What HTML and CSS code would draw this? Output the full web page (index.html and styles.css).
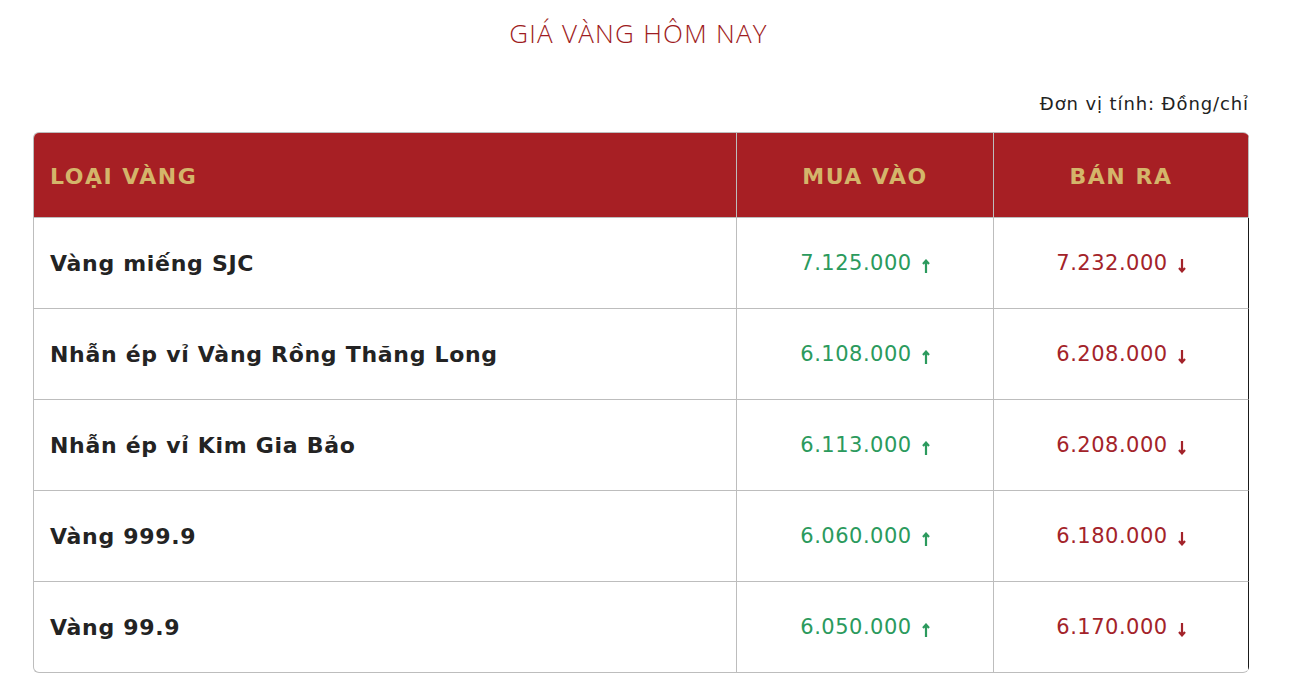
FILE: index.html
```html
<!DOCTYPE html>
<html lang="vi">
<head>
<meta charset="utf-8">
<title>Giá vàng hôm nay</title>
<link rel="stylesheet" href="styles.css">
</head>
<body>
<div class="page">
  <h1 class="title">GIÁ VÀNG HÔM NAY</h1>
  <div class="unit">Đơn vị tính: Đồng/chỉ</div>
  <div class="price-table">
    <div class="cell head name">LOẠI VÀNG</div>
    <div class="cell head">MUA VÀO</div>
    <div class="cell head last">BÁN RA</div>

    <div class="cell name">Vàng miếng SJC</div>
    <div class="cell num up">7.125.000<svg class="arrow" viewBox="0 0 8 14"><path d="M4 14V2.2M1 5L4 1.6L7 5" /></svg></div>
    <div class="cell num down last">7.232.000<svg class="arrow" viewBox="0 0 8 14"><path d="M4 0V11.8M1 9L4 12.4L7 9" /></svg></div>

    <div class="cell name">Nhẫn ép vỉ Vàng Rồng Thăng Long</div>
    <div class="cell num up">6.108.000<svg class="arrow" viewBox="0 0 8 14"><path d="M4 14V2.2M1 5L4 1.6L7 5" /></svg></div>
    <div class="cell num down last">6.208.000<svg class="arrow" viewBox="0 0 8 14"><path d="M4 0V11.8M1 9L4 12.4L7 9" /></svg></div>

    <div class="cell name">Nhẫn ép vỉ Kim Gia Bảo</div>
    <div class="cell num up">6.113.000<svg class="arrow" viewBox="0 0 8 14"><path d="M4 14V2.2M1 5L4 1.6L7 5" /></svg></div>
    <div class="cell num down last">6.208.000<svg class="arrow" viewBox="0 0 8 14"><path d="M4 0V11.8M1 9L4 12.4L7 9" /></svg></div>

    <div class="cell name">Vàng 999.9</div>
    <div class="cell num up">6.060.000<svg class="arrow" viewBox="0 0 8 14"><path d="M4 14V2.2M1 5L4 1.6L7 5" /></svg></div>
    <div class="cell num down last">6.180.000<svg class="arrow" viewBox="0 0 8 14"><path d="M4 0V11.8M1 9L4 12.4L7 9" /></svg></div>

    <div class="cell name bottom">Vàng 99.9</div>
    <div class="cell num up bottom">6.050.000<svg class="arrow" viewBox="0 0 8 14"><path d="M4 14V2.2M1 5L4 1.6L7 5" /></svg></div>
    <div class="cell num down last bottom">6.170.000<svg class="arrow" viewBox="0 0 8 14"><path d="M4 0V11.8M1 9L4 12.4L7 9" /></svg></div>
  </div>
</div>
</body>
</html>
```
FILE: styles.css
```css
html, body {
  margin: 0;
  padding: 0;
  background: #ffffff;
}

.page {
  margin: 0 40px 0 33px;
  padding-top: 17px;
  font-family: "DejaVu Sans", "Noto Sans", sans-serif;
  color: #222222;
}

.title {
  margin: 0;
  text-align: center;
  font-family: "Open Sans", "Liberation Sans", sans-serif;
  font-weight: 300;
  font-size: 26px;
  line-height: 32px;
  color: #9e1c22;
  letter-spacing: 1.25px;
  padding-right: 5px;
}

.unit {
  margin-top: 43px;
  text-align: right;
  font-size: 18px;
  line-height: 24px;
  letter-spacing: 0.9px;
  color: #222222;
}

.price-table {
  margin-top: 16px;
  display: grid;
  grid-template-columns: 703px 257px 1fr;
  border: 1px solid #bdbdbd;
  border-right: 0;
  border-radius: 6px;
  overflow: hidden;
}

.cell {
  height: 91px;
  box-sizing: border-box;
  display: flex;
  align-items: center;
  justify-content: center;
  border-bottom: 1px solid #bdbdbd;
  border-right: 1px solid #bdbdbd;
  font-size: 21px;
}

.cell.last {
  border-right: 1px solid #1a1a1a;
}

.cell.bottom {
  height: 90px;
  border-bottom: 0;
}

.cell.head {
  height: 85px;
  background: #a71f24;
  color: #d4b56a;
  font-weight: 700;
  font-size: 22px;
  letter-spacing: 1.5px;
  padding-top: 2px;
}

.cell.head.last {
  border-right: 1px solid #bdbdbd;
}

.cell.name {
  justify-content: flex-start;
  padding-left: 16px;
}

.cell.name:not(.head) {
  font-weight: 600;
  font-size: 22px;
  letter-spacing: 0.7px;
  color: #232323;
}

.num {
  font-weight: 400;
  gap: 10px;
  letter-spacing: 0.5px;
}

.num.up {
  color: #2b9a5d;
}

.num.down {
  color: #a3232a;
}

.arrow {
  width: 8px;
  height: 14px;
  margin-top: 5px;
  fill: none;
  stroke: currentColor;
  stroke-width: 2.2;
}
```
